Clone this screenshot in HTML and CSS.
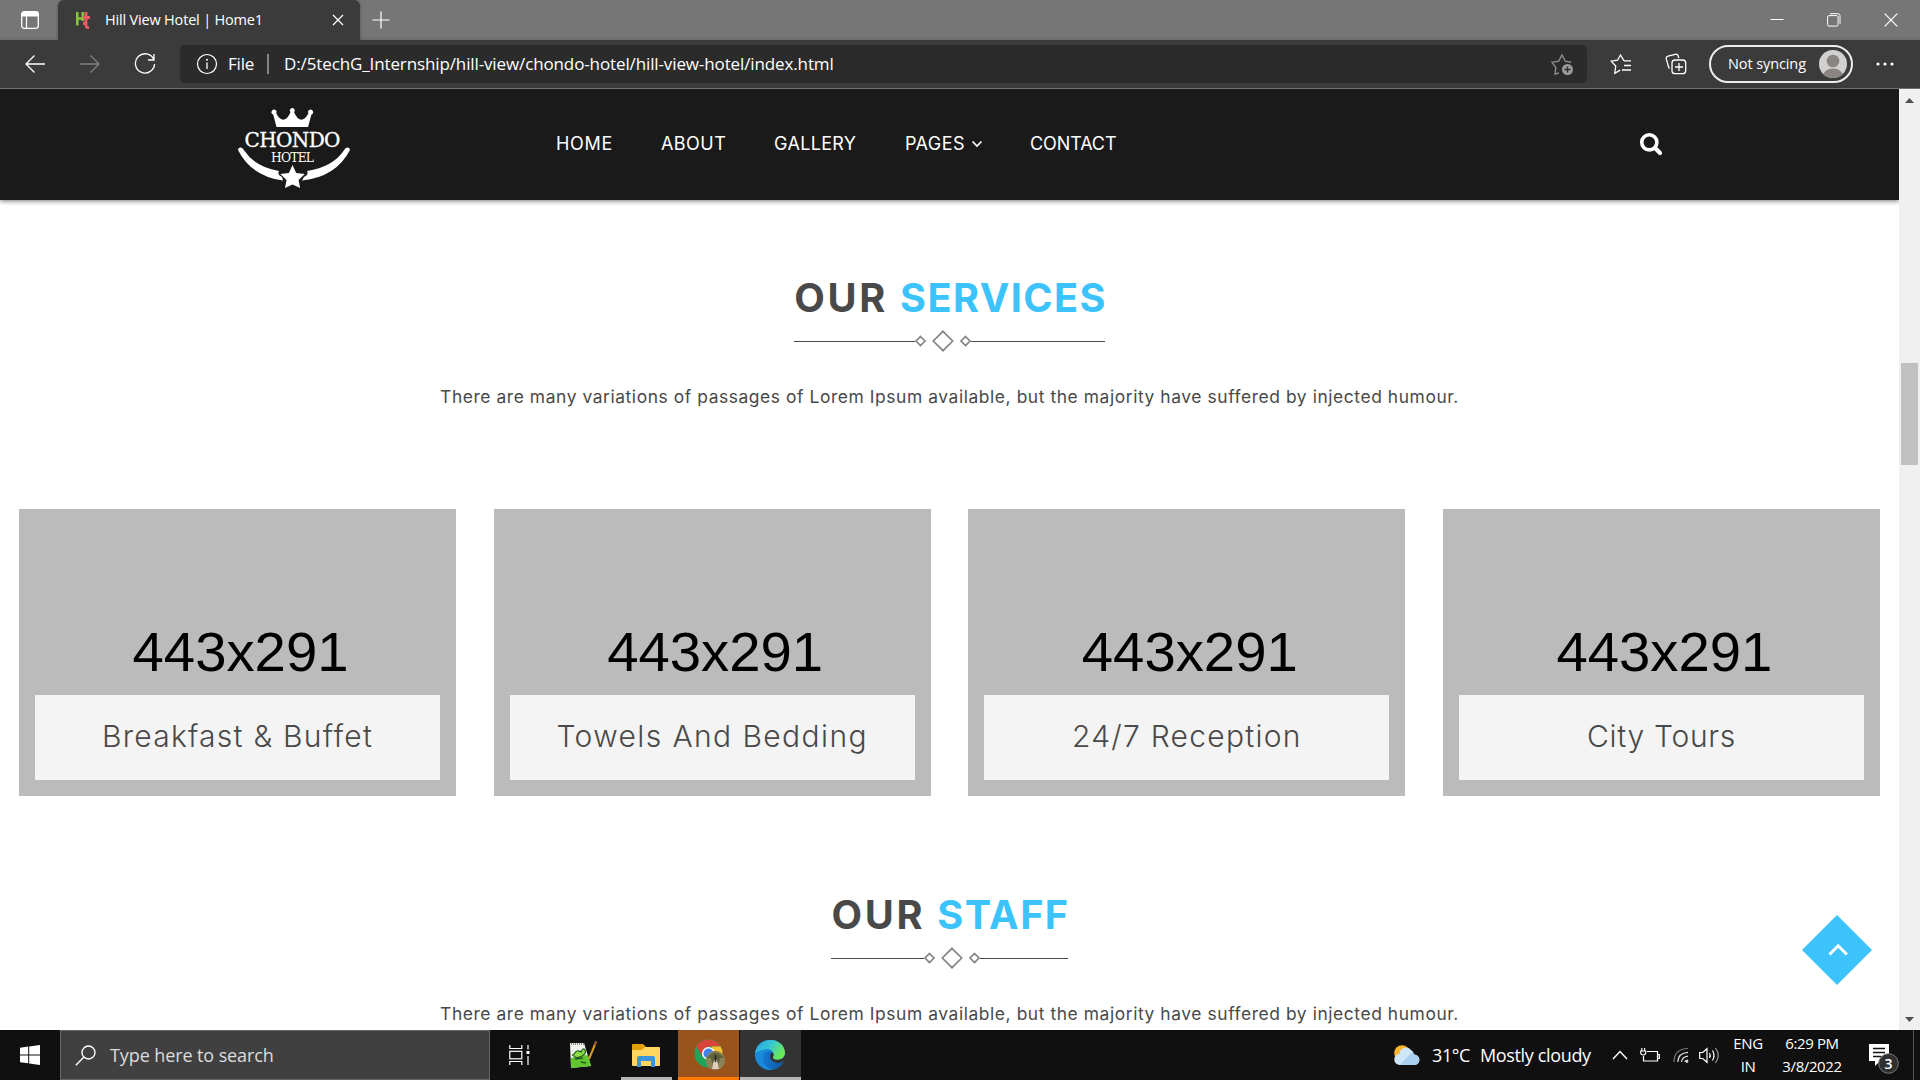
FILE: index.html
```html
<!DOCTYPE html>
<html lang="en">
<head>
<meta charset="utf-8">
<title>Hill View Hotel | Home1</title>
<link rel="stylesheet" href="styles.css">
</head>
<body>
<div class="titlebar">
  <div class="tab-actions"><svg width="20" height="20" viewBox="0 0 20 20"><rect x="1.7" y="1.7" width="16.6" height="16.6" rx="2.5" fill="none" stroke="#fff" stroke-width="1.3"/><path d="M1.5 6.5V4a2.500 2.500 0 0 1 2.500-2.500h12A2.500 2.500 0 0 1 18.500 4v2.500z" fill="#fff"/><path d="M6.500 6v12" stroke="#fff" stroke-width="1.200"/></svg></div>
  <div class="tab">
    <svg class="favicon" width="16" height="20" viewBox="0 0 16 20"><path d="M2.300 2v13.500M2.300 8.500h6M7.800 2v9" stroke="#86c440" stroke-width="2.600" fill="none"/><path d="M11 2v13q0 3 3 2.500M8 7.500h7M10 13.500H8" stroke="#ee5a5f" stroke-width="2.800" fill="none"/></svg>
    <span class="tab-title">Hill View Hotel | Home1</span>
    <svg class="tab-close" width="12" height="12" viewBox="0 0 12 12"><path d="M1 1l10 10M11 1L1 11" stroke="#fff" stroke-width="1.300"/></svg>
  </div>
  <svg class="new-tab" width="18" height="18" viewBox="0 0 18 18"><path d="M9 .5v17M.5 9h17" stroke="#fff" stroke-width="1.200"/></svg>
  <div class="window-controls">
    <svg width="14" height="14" viewBox="0 0 14 14"><path d="M.5 6.500h13" stroke="#fff"/></svg>
    <svg width="14" height="14" viewBox="0 0 14 14" fill="none" stroke="#fff"><rect x=".6" y="2.600" width="10.500" height="10.500" rx="1.500"/><path d="M3 .7h8a2 2 0 0 1 2 2v8"/></svg>
    <svg width="14" height="14" viewBox="0 0 14 14"><path d="M.7.7l12.600 12.600M13.300.7L.7 13.300" stroke="#fff" stroke-width="1.200"/></svg>
  </div>
</div>
<div class="toolbar">
  <div class="nav-buttons">
    <svg width="22" height="20" viewBox="0 0 22 20" fill="none" stroke="#fff" stroke-width="1.300"><path d="M10.500 1.500L2 10l8.500 8.500M2 10h19"/></svg>
    <svg width="22" height="20" viewBox="0 0 22 20" fill="none" stroke="#808080" stroke-width="1.300"><path d="M11.500 1.500L20 10l-8.500 8.500M20 10H1"/></svg>
    <svg width="22" height="22" viewBox="0 0 22 22" fill="none" stroke="#fff" stroke-width="1.300"><path d="M19.800 6.500A9.600 9.600 0 1 0 20.600 11M20 1v6h-6"/></svg>
  </div>
  <div class="address">
    <svg width="22" height="22" viewBox="0 0 22 22"><circle cx="11" cy="11" r="9.500" fill="none" stroke="#fff" stroke-width="1.200"/><path d="M11 9.500V16" stroke="#fff" stroke-width="1.300"/><circle cx="11" cy="6.800" r="1" fill="#fff"/></svg>
    <span class="scheme">File</span><span class="divider"></span>
    <span class="url">D:/5techG_Internship/hill-view/chondo-hotel/hill-view-hotel/index.html</span>
    <svg class="fav-add" width="23" height="22" viewBox="0 0 23 22"><path d="M8 20l-4 1 .8-6.500L1 9.300l6.700-1.200L11 2l3.200 6.100 6 1.100" fill="none" stroke="#8c8c8c" stroke-width="1.400"/><circle cx="16.500" cy="16.500" r="5.500" fill="#9b9b9b"/><path d="M16.500 13.500v6M13.500 16.500h6" stroke="#2b2b2b" stroke-width="1.300"/></svg>
  </div>
  <div class="tools">
    <svg width="22" height="22" viewBox="0 0 22 22" fill="none" stroke="#fff" stroke-width="1.300"><path d="M14 7.800h7M14 12.500h7M12 17h9M14 7.800L10.500 2 7.500 7.200l-6.300 1 4.500 4.800-.9 7.200 5.400-3.100"/></svg>
    <svg width="22" height="22" viewBox="0 0 22 22" fill="none" stroke="#fff" stroke-width="1.300"><path d="M4.500 15.500a3 3 0 0 1-1-1.800L1.300 6.200a2.500 2.500 0 0 1 1.700-3L10.200 1.300a2.500 2.500 0 0 1 3 1.700l.6 2.200"/><rect x="7" y="7" width="13.700" height="13.700" rx="3"/><path d="M14 10v8M10 14h8"/></svg>
    <div class="profile"><span>Not syncing</span>
      <svg width="28" height="28" viewBox="0 0 28 28"><defs><clipPath id="avatar"><circle cx="14" cy="14" r="14"/></clipPath></defs><g clip-path="url(#avatar)"><path fill="#d2d0ce" d="M0 0h28v28H0z"/><circle cx="14" cy="11" r="6.300" fill="#8a8583"/><ellipse cx="14" cy="27" rx="10.500" ry="8.500" fill="#8a8583"/></g></svg>
    </div>
    <svg class="more" width="18" height="4" viewBox="0 0 18 4" fill="#fff"><circle cx="2" cy="2" r="1.600"/><circle cx="9" cy="2" r="1.600"/><circle cx="16" cy="2" r="1.600"/></svg>
  </div>
</div>
<div class="viewport">
  <div class="page">
    <header class="site-header">
      <svg class="logo" width="114" height="82" viewBox="0 0 114 82" fill="#fff">
        <path d="M39.500 20l-3.300-12.500a2.500 2.500 0 1 1 3-1.200q3.200 6.500 7.200 6.500 4.200-.5 7.100-7.500a2.500 2.500 0 1 1 3.600 0q2.900 7 7.100 7.500 4 0 7.200-6.500a2.500 2.500 0 1 1 3 1.200L71.100 20z"/>
        <text class="logo-name" x="7.500" y="39.700" textLength="96">CHONDO</text>
        <text class="logo-sub" x="34" y="54.500" textLength="43">HOTEL</text>
        <path d="M1 43q0-3 3-2.500 2 .5 3 2.800Q18 60 42 64q-2 4 3 6l1 3.500Q14 69 1 43zM113 43q0-3-3-2.500-2 .5-3 2.800Q96 60 70 64q2 4-3 6l-2 3.500Q99 70 113 43z"/>
        <path d="M55.500 58l3.700 8 8.600 1-6.200 6 1.500 8-7.600-3.500-7.500 3.500 1.500-8-6.200-6 8.600-1z"/>
      </svg>
      <nav class="menu">
        <a class="m-home">HOME</a><a class="m-about">ABOUT</a><a class="m-gallery">GALLERY</a>
        <a class="m-pages">PAGES <svg width="12" height="8" viewBox="0 0 12 8"><path d="M1.500 1.500L6 6l4.500-4.500" fill="none" stroke="#fff" stroke-width="1.700"/></svg></a><a class="m-contact">CONTACT</a>
      </nav>
      <svg class="search" width="24" height="24" viewBox="0 0 24 24" fill="none" stroke="#fff"><circle cx="10.300" cy="10.300" r="7.600" stroke-width="3.600"/><path d="M16 16l5 5" stroke-width="4.200" stroke-linecap="round"/></svg>
    </header>
    <section class="intro services">
      <h2>OUR <em>SERVICES</em></h2>
      <div class="rule"><svg width="56" height="22" viewBox="0 0 56 22" fill="none" stroke="#858585" stroke-width="1.700"><path d="M5.500 6.500L10 11l-4.500 4.500L1 11zM28 1.300l9.700 9.700-9.700 9.700L18.300 11zM50.500 6.500L55 11l-4.500 4.500L46 11z"/></svg></div>
      <p>There are many variations of passages of Lorem Ipsum available, but the majority have suffered by injected humour.</p>
    </section>
    <div class="cards">
      <article class="card"><div class="placeholder">443x291</div><h3 class="c-breakfast">Breakfast &amp; Buffet</h3></article>
      <article class="card"><div class="placeholder">443x291</div><h3 class="c-towels">Towels And Bedding</h3></article>
      <article class="card"><div class="placeholder">443x291</div><h3 class="c-reception">24/7 Reception</h3></article>
      <article class="card"><div class="placeholder">443x291</div><h3 class="c-tours">City Tours</h3></article>
    </div>
    <section class="intro staff">
      <h2>OUR <em>STAFF</em></h2>
      <div class="rule"><svg width="56" height="22" viewBox="0 0 56 22" fill="none" stroke="#858585" stroke-width="1.700"><path d="M5.500 6.500L10 11l-4.500 4.500L1 11zM28 1.300l9.700 9.700-9.700 9.700L18.300 11zM50.500 6.500L55 11l-4.500 4.500L46 11z"/></svg></div>
      <p>There are many variations of passages of Lorem Ipsum available, but the majority have suffered by injected humour.</p>
    </section>
    <svg class="to-top" width="70" height="70" viewBox="0 0 70 70"><path d="M35 0l35 35-35 35L0 35z" fill="#3cc3fb"/><path d="M27.500 39.500l8.700-8.700 8.700 8.700" fill="none" stroke="#fff" stroke-width="3"/></svg>
  </div>
  <div class="scrollbar">
    <svg width="9" height="5" viewBox="0 0 9 5"><path d="M0 5l4.500-5L9 5z" fill="#505050"/></svg>
    <div class="track"><div class="thumb"></div></div>
    <svg width="9" height="5" viewBox="0 0 9 5"><path d="M0 0l4.500 5L9 0z" fill="#505050"/></svg>
  </div>
</div>
<div class="taskbar">
  <div class="start"><svg width="20" height="20" viewBox="0 0 20 20" fill="#fff"><path d="M0 2.700L8.200 1.600V9.400H0zM9.200 1.400L20 0v9.400H9.200zM0 10.400h8.200v7.900L0 17.200zM9.200 10.400H20V20L9.200 18.500z"/></svg></div>
  <div class="task-search"><svg width="21" height="21" viewBox="0 0 21 21" fill="none" stroke="#fff" stroke-width="1.400"><circle cx="13.500" cy="7.500" r="6.500"/><path d="M9 12L.8 20.300"/></svg><span>Type here to search</span></div>
  <div class="app view"><svg width="21" height="20" viewBox="0 0 21 20" fill="none" stroke="#fff" stroke-width="1.200"><path d="M.8 0v3.500h12V0M.8 20v-3.500h12V20"/><rect x=".8" y="6.300" width="12" height="7.500"/><path d="M19 0v4.500M19 11v9"/><path d="M17.500 6h3v3h-3z" fill="#fff" stroke="none"/></svg></div>
  <div class="app"><svg width="28" height="28" viewBox="0 0 28 28"><path d="M1 2h14l7 23-20 2z" fill="#eef2ea"/><path d="M2 17q8-3 17-3l3 11-20 2z" fill="#5fc62f"/><path d="M2 3h13" stroke="#888" stroke-width="2" stroke-dasharray="1 1"/><path d="M5 13q3-5 7-2 2-5 4-2t-3 6q-6 3-8 0-3-1 0-2z" fill="#8bdd45" stroke="#24591d" stroke-width="1.200"/><path d="M6 18l8-1M12 21l5 1" stroke="#24591d" stroke-width="1.300"/><path d="M27 1l-7 17" stroke="#d89a27" stroke-width="2"/><path d="M27.500 0l-2 4" stroke="#8e502b" stroke-width="2"/></svg></div>
  <div class="app open"><svg width="28" height="24" viewBox="0 0 28 24"><path d="M0 2q0-1 1-1h10l3 3-2 3H0z" fill="#e2a10b"/><path d="M0 7h10l3-3h14q1 0 1 1v17q0 1-1 1H1q-1 0-1-1z" fill="#ffd660"/><path d="M5 24V15q0-2 2-2h14q2 0 2 2v9h-4v-6H9v6z" fill="#3c94dc"/></svg></div>
  <div class="app alert"><svg width="32" height="32" viewBox="0 0 32 32"><circle cx="14.500" cy="14.500" r="14" fill="#1fa35a"/><path d="M2.400 7.500A14 14 0 0 1 26.600 7.500H14.500l-6 10z" fill="#d9453b"/><path d="M26.600 7.500A14 14 0 0 1 14.500 28.500l6-14-3-7z" fill="#fbc42d"/><circle cx="14.500" cy="14.500" r="6.500" fill="#fff"/><circle cx="14.500" cy="14.500" r="5" fill="#4183ee"/><circle cx="21.500" cy="21.500" r="9.700" fill="#8b8356"/><path d="M13 19q8-11 17 0l-4 0-1 5h-7l-1-5z" fill="#5f6238"/><path d="M20 21h3l2 9h-7z" fill="#dccdba"/><path d="M21.500 16v7" stroke="#20282a" stroke-width="1.600"/></svg></div>
  <div class="app active"><svg width="30" height="30" viewBox="0 0 30 30"><defs><linearGradient id="edge-top" x1="0" y1="0" x2="1" y2=".5"><stop offset="0" stop-color="#259ee5"/><stop offset=".5" stop-color="#35c5d6"/><stop offset="1" stop-color="#6bea55"/></linearGradient><linearGradient id="edge-base"><stop offset="0" stop-color="#1479d2"/><stop offset="1" stop-color="#0d569d"/></linearGradient></defs><circle cx="15" cy="15" r="15" fill="#198bda"/><path d="M.1 13.500C1.500-4.500 29-4.300 30 12.500c0 6-5 8-10 7-3-.7-3-1.700-1.700-3.200C20 11 14 8 9 9.500c-4 1-7 2-8.900 4z" fill="url(#edge-top)"/><path d="M8 18C8 13 13 10 17 12c-6 6 2 14 11.500 9.500C22 34 8 30 8 18z" fill="url(#edge-base)"/><path d="M17 12c-5 5 0 11 6 11 2.500 0 4-.8 5.500-1.500L30 18v-3l-2 3c-4 3-12 2-9.700-1.700 1-1.700 0-3.700-1.300-4.300z" fill="#333"/></svg></div>
  <div class="tray">
    <svg class="weather-icon" width="26" height="21" viewBox="0 0 26 21"><circle cx="8" cy="8" r="7.800" fill="#f9b52c"/><path d="M6 20a5.500 5.500 0 0 1-.5-11A6.500 6.500 0 0 1 17 5a6 6 0 0 1 3 4.500A5.200 5.200 0 0 1 20 20z" fill="#cfe6f9"/><path d="M6 20l12-13 2.500 2.500A5.200 5.200 0 0 1 20 20z" fill="#a9cfef"/></svg>
    <span class="temp">31°C</span><span class="sky">Mostly cloudy</span>
    <svg class="up" width="16" height="10" viewBox="0 0 16 10"><path d="M1 9l7-7.500L15 9" fill="none" stroke="#fff" stroke-width="1.400"/></svg>
    <svg class="battery" width="20" height="15" viewBox="0 0 20 15" fill="none" stroke="#fff" stroke-width="1.200"><path d="M7 3.500h10.500v9.500H3.500V8M17.500 6.500h1.800v4h-1.800M1.800 0v3M4.600 0v3M.7 3h5v1.500q0 2.500-2.500 2.500T.7 4.500z"/></svg>
    <svg class="wifi" width="16" height="16" viewBox="0 0 16 16" fill="none" stroke="#ddd" stroke-width="1.200"><path d="M1 15Q1 2 15 1.500" stroke="#777"/><path d="M4.800 15Q5 6 15 5.300M8.500 15Q9 10 15 9.200M12 15q0-2 3-2"/><circle cx="14" cy="14.500" r=".8"/></svg>
    <svg class="volume" width="21" height="17" viewBox="0 0 21 17" fill="none" stroke="#fff" stroke-width="1.200"><path d="M.7 5.500h3L8 1.700v13.600l-4.300-3.800h-3zM10.500 6q1.500 2.500 0 5M13.500 3.500q3 5 0 10"/><path d="M16.500 1q5.500 7.500 0 15" stroke="#999"/></svg>
    <div class="lang"><span>ENG</span><span>IN</span></div>
    <div class="clock"><span>6:29 PM</span><span>3/8/2022</span></div>
    <svg class="notice" width="30" height="32" viewBox="0 0 30 32"><path d="M0 1h20v17H11l-5 5v-5H0z" fill="#fff"/><path d="M4 5.500h12M4 9.500h12M4 13.500h8" stroke="#111" stroke-width="1.300"/><circle cx="19.500" cy="20.500" r="9.800" fill="#303030" stroke="#777"/><text class="notice-count" x="19.500" y="25.500" text-anchor="middle">3</text></svg>
    <i class="desktop-edge"></i>
  </div>
</div>
</body>
</html>
```
FILE: styles.css
```css
* { box-sizing: border-box; }
body { margin: 0; width: 1920px; height: 1080px; overflow: hidden; display: flex; flex-direction: column; font-family: "Open Sans", "Noto Sans", sans-serif; color: #fff; background: #fff; }
svg { display: block; flex: none; }
span, a, h2, h3 { white-space: nowrap; }

.titlebar { height: 40px; flex: none; display: flex; background: linear-gradient(#767676 90%, #6b6b6b); }
.tab-actions { width: 58px; padding: 10px 0 0 20px; }
.tab { width: 302px; height: 40px; display: flex; align-items: center; background: #3b3b3b; border-radius: 6px 6px 0 0; padding: 0 16px 0 17px; box-shadow: 0 0 3px rgba(0,0,0,.35); }
.tab-title { margin-left: 14px; padding-bottom: 2px; font-size: 14.500px; letter-spacing: -.18px; }
.tab-close { margin-left: auto; }
.new-tab { margin: 11px 0 0 12px; }
.window-controls { margin: 13px 22px 0 auto; display: flex; gap: 43px; }

.toolbar { height: 49px; flex: none; display: flex; background: #3b3b3b; border-bottom: 1px solid #6f6f6f; }
.nav-buttons { width: 180px; display: flex; align-items: center; gap: 33px; padding-left: 24px; padding-bottom: 1px; }
.address { width: 1407px; height: 38px; margin-top: 5px; display: flex; align-items: center; background: #2b2b2b; border-radius: 5px; padding: 0 13px 1px 16px; }
.scheme { margin-left: 10px; padding-bottom: 1px; font-size: 17px; letter-spacing: -.2px; width: 39px; }
.divider { width: 2px; height: 20px; background: #858585; margin-right: 15px; }
.url { padding-bottom: 1px; font-size: 17px; letter-spacing: -.12px; }
.fav-add { margin-left: auto; }
.tools { flex: 1; display: flex; align-items: center; padding-left: 23px; padding-bottom: 1px; }
.tools > svg + svg { margin-left: 33px; }
.profile { display: flex; align-items: center; width: 144px; height: 38px; margin-left: 22px; border: 2px solid #eee; border-radius: 19px; padding: 0 4px 0 17px; justify-content: space-between; font-size: 14.500px; letter-spacing: -.1px; }
.profile span { padding-bottom: 1px; }
.tools .more { margin-left: 23px; }

.viewport { height: 941px; flex: none; display: flex; }
.page { width: 1899px; height: 941px; overflow: hidden; position: relative; background: #fff; color: #494949; font-family: Inter, sans-serif; }
.site-header { height: 111px; display: flex; background: #1a1a1a; box-shadow: 0 1px 5px rgba(0,0,0,.55); position: relative; }
.logo { margin: 18px 0 0 237px; }
.logo-name { font: 20px "DejaVu Serif", serif; stroke: #fff; stroke-width: .3px; }
.logo-sub { font: 12.300px "DejaVu Serif", serif; }
.menu { display: flex; align-items: flex-start; margin-left: 205px; color: #fff; font-size: 18px; line-height: 21px; padding-top: 44px; }
.menu a { display: flex; align-items: center; }
.menu .m-home { width: 105px; letter-spacing: .7px; }
.menu .m-about { width: 113px; letter-spacing: .45px; }
.menu .m-gallery { width: 131px; letter-spacing: .35px; }
.menu .m-pages { width: 125px; gap: 6px; letter-spacing: .45px; }
.menu .m-contact { letter-spacing: -.1px; }
.search { margin: 43px 236px 0 auto; }

.intro { display: flex; flex-direction: column; align-items: center; }
.services { padding-top: 74px; height: 309px; }
.staff { padding-top: 95px; }
.intro h2 { margin: 0 -2px 0 0; font-size: 39.700px; line-height: 48px; font-weight: 700; color: #494949; letter-spacing: 2.700px; }
.intro em { font-style: normal; color: #3cc3fb; letter-spacing: 1.400px; }
.rule { width: 311px; height: 22px; margin-top: 8px; display: flex; align-items: center; }
.rule::before, .rule::after { content: ""; height: 1px; margin-top: 1px; background: #494949; }
.rule::before { width: 121px; }
.rule::after { flex: 1; }
.staff .rule { width: 237px; }
.staff .rule::before { width: 93px; }
.intro p { margin: 31px 0 0; font-size: 17.400px; line-height: 28px; white-space: nowrap; letter-spacing: .58px; }

.cards { display: grid; grid-template-columns: repeat(4, 1fr); gap: 37.500px; padding: 0 19px; }
.card { height: 287px; background: #bbb; padding: 111px 16px 16px; display: flex; flex-direction: column; justify-content: space-between; }
.placeholder { padding-left: 6px; color: #000; font: 56.300px/64px "Liberation Sans", Arial, sans-serif; text-align: center; }
.card h3 { margin: 0; height: 85px; padding-bottom: 3px; background: #f4f4f4; display: flex; align-items: center; justify-content: center; font-size: 30px; font-weight: 300; letter-spacing: 1.250px; }
.card .c-towels { letter-spacing: 1.400px; }
.card .c-tours { letter-spacing: .7px; }
.to-top { position: absolute; left: 1802px; top: 826px; }

.scrollbar { width: 21px; background: #f0f0f0; display: flex; flex-direction: column; align-items: center; padding: 9px 0 8px; }
.track { flex: 1; width: 17px; padding-top: 260px; }
.thumb { height: 102px; background: #c1c1c1; }

.taskbar { height: 50px; flex: none; display: flex; background: #101010; }
.start { width: 60px; padding: 15px 0 0 20px; }
.task-search { width: 430px; display: flex; align-items: center; border: 1px solid #666; background: #404040; padding-left: 14px; color: #dcdcdc; font-size: 18px; }
.task-search span { margin-left: 14px; letter-spacing: -.1px; }
.app { width: 62px; display: flex; align-items: center; justify-content: center; }
.app.view { padding-right: 3px; }
.app.open { width: 64px; background: linear-gradient(#b8b5b8, #b8b5b8) 7px 47px / 51px 3px no-repeat; }
.app.alert { width: 61px; background: #9b531c; border-bottom: 3px solid #ff7800; padding: 3px 0 0 2px; }
.app.active { width: 61px; margin-left: 1px; background: #333; border-bottom: 3px solid #b8b5b8; padding: 3px 2px 0 0; }
.tray { margin-left: auto; width: 526px; display: flex; align-items: center; }
.temp { width: 48px; margin-left: 12px; font-size: 18px; letter-spacing: -.4px; }
.sky { width: 132px; font-size: 18px; letter-spacing: -.35px; }
.battery { margin-left: 12px; }
.wifi { margin-left: 13px; }
.volume { margin-left: 10px; }
.lang, .clock { display: flex; flex-direction: column; align-items: center; font-size: 15px; line-height: 23px; letter-spacing: -.4px; }
.lang { width: 56px; }
.clock { width: 72px; }
.notice { margin: 8px 0 0 21px; }
.notice-count { font: 600 14px "Open Sans", sans-serif; fill: #fff; }
.desktop-edge { width: 1px; height: 50px; margin-left: 14px; background: #555; }
```
